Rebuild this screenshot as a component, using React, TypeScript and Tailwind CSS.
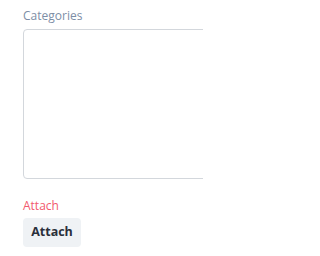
export default function App() {
  return (
    <div className="w-[203px] h-[256px] overflow-hidden bg-white pl-[23px] pt-[8px]" style={{ fontFamily: '"Open Sans", "Noto Sans", sans-serif' }}>
      <div className="text-[12px] leading-[16px] text-[#7d8ea6] mb-[5px]">Categories</div>
      <div className="w-[200px] h-[150px] border border-[#d3d7dc] rounded-[4px] bg-white" />
      <div className="mt-[19px] text-[12px] leading-[16px] text-[#f25a6e]">Attach</div>
      <button className="mt-[4px] w-[58px] h-[29px] rounded-[4px] bg-[#eff2f5] text-[12.5px] font-bold text-[#2a2f3a] flex items-center justify-center">
        Attach
      </button>
    </div>
  );
}
